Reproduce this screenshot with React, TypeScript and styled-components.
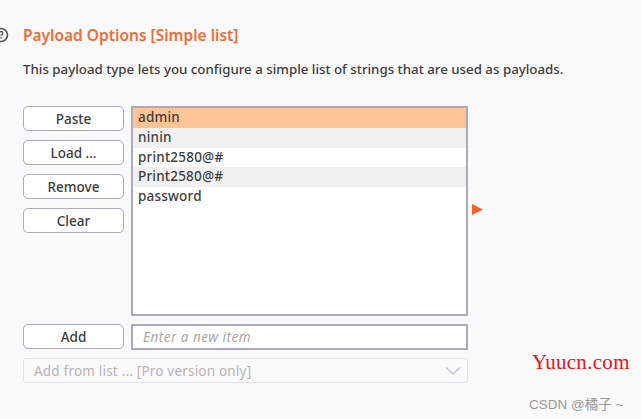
import React from "react";
import styled, { createGlobalStyle } from "styled-components";

const Global = createGlobalStyle`
  html, body { margin: 0; padding: 0; background: #f9f9f9; }
  body { font-family: "Noto Sans", "Open Sans", sans-serif; color: #3d3d3d; }
`;

const Page = styled.div`
  position: relative;
  width: 641px;
  height: 419px;
  overflow: hidden;
  box-sizing: border-box;
  padding: 24px 0 0 0;
`;

const Header = styled.div`
  display: flex;
  align-items: center;
  gap: 14px;
  margin-left: -7px;
  height: 22px;
`;

const HelpIcon = styled.svg`
  width: 16px;
  height: 16px;
  flex: none;
`;

const Title = styled.h2`
  margin: 0;
  font-size: 15.5px;
  font-weight: 600;
  color: #f36c35;
`;

const Description = styled.p`
  margin: 14px 0 0 23px;
  font-size: 13.3px;
  line-height: 18px;
  font-weight: 500;
  color: #3d3d3d;
`;

const Body = styled.div`
  margin: 28px 0 0 23px;
  display: grid;
  grid-template-columns: 101px 337px 20px;
  column-gap: 7px;
  row-gap: 8px;
  align-items: start;
`;

const ButtonColumn = styled.div`
  display: flex;
  flex-direction: column;
  gap: 9px;
`;

const Button = styled.button`
  box-sizing: border-box;
  height: 25px;
  width: 101px;
  border: 1.5px solid #abaabb;
  border-radius: 5px;
  background: #fff;
  font-family: inherit;
  font-size: 13.5px;
  font-weight: 500;
  color: #3d3d3d;
  padding: 0;
  cursor: pointer;
`;

const ListBox = styled.div`
  box-sizing: border-box;
  height: 210px;
  border: 2px solid #abaabb;
  background: #fff;
  display: flex;
  flex-direction: column;
`;

const Row = styled.div<{ $variant: "selected" | "alt" | "plain" }>`
  height: 19.8px;
  line-height: 19.8px;
  padding-left: 5px;
  font-size: 13.5px;
  font-weight: 500;
  letter-spacing: 0.2px;
  color: #3d3d3d;
  background: ${(p) =>
    p.$variant === "selected" ? "#ffc496" : p.$variant === "alt" ? "#f1f1f1" : "#fff"};
`;

const ArrowCell = styled.div`
  align-self: center;
  display: flex;
  align-items: center;
  margin-left: -3px;
  margin-top: -4px;
`;

const TextInput = styled.input`
  box-sizing: border-box;
  height: 26px;
  width: 337px;
  border: 2px solid #abaabb;
  background: #fff;
  padding: 0 10px;
  font-family: inherit;
  font-size: 13.5px;
  letter-spacing: 0.5px;
  outline: none;
  &::placeholder {
    color: #a9a9a9;
    font-style: italic;
  }
`;

const Select = styled.div`
  grid-column: 1 / span 2;
  box-sizing: border-box;
  height: 25px;
  border: 1.5px solid #e2e2e6;
  border-radius: 3px;
  background: #fafafa;
  display: flex;
  align-items: center;
  justify-content: space-between;
  padding: 0 6px 0 10px;
  font-size: 13.5px;
  letter-spacing: 0.2px;
  color: #b4b4b4;
`;

const Watermark = styled.div`
  position: absolute;
  left: 532px;
  top: 350px;
  font-family: "Liberation Serif", "Times New Roman", serif;
  font-size: 21px;
  color: #f2111c;
  letter-spacing: 0.3px;
`;

const Credit = styled.div`
  position: absolute;
  left: 529px;
  top: 393px;
  font-family: "Liberation Sans", "Noto Sans CJK SC", sans-serif;
  font-size: 13.5px;
  color: #9a9a9a;
`;

const items: { text: string; v: "selected" | "alt" | "plain" }[] = [
  { text: "admin", v: "selected" },
  { text: "ninin", v: "alt" },
  { text: "print2580@#", v: "plain" },
  { text: "Print2580@#", v: "alt" },
  { text: "password", v: "plain" },
];

export default function App() {
  return (
    <Page>
      <Global />
      <Header>
        <HelpIcon viewBox="0 0 16 16">
          <circle cx="8" cy="8" r="6.5" fill="none" stroke="#555" strokeWidth="1.5" />
          <path d="M6.4 6.2a1.7 1.7 0 1 1 2.3 1.6c-.5.2-.7.5-.7 1" fill="none" stroke="#555" strokeWidth="1.3" />
          <circle cx="8" cy="10.9" r="0.8" fill="#555" />
        </HelpIcon>
        <Title>Payload Options [Simple list]</Title>
      </Header>
      <Description>
        This payload type lets you configure a simple list of strings that are used as payloads.
      </Description>
      <Body>
        <ButtonColumn>
          <Button>Paste</Button>
          <Button>Load ...</Button>
          <Button>Remove</Button>
          <Button>Clear</Button>
        </ButtonColumn>
        <ListBox>
          {items.map((it) => (
            <Row key={it.text} $variant={it.v}>
              {it.text}
            </Row>
          ))}
        </ListBox>
        <ArrowCell>
          <svg width="11" height="11" viewBox="0 0 11 11">
            <path d="M0 0 L11 5.5 L0 11 Z" fill="#f4622a" />
          </svg>
        </ArrowCell>
        <Button>Add</Button>
        <TextInput placeholder="Enter a new item" />
        <span />
        <Select>
          <span>Add from list ... [Pro version only]</span>
          <svg width="16" height="10" viewBox="0 0 16 10">
            <path d="M1 1.5 L8 8 L15 1.5" fill="none" stroke="#c4c4c8" strokeWidth="1.5" />
          </svg>
        </Select>
      </Body>
      <Watermark>Yuucn.com</Watermark>
      <Credit>CSDN @橘子 ~</Credit>
    </Page>
  );
}
